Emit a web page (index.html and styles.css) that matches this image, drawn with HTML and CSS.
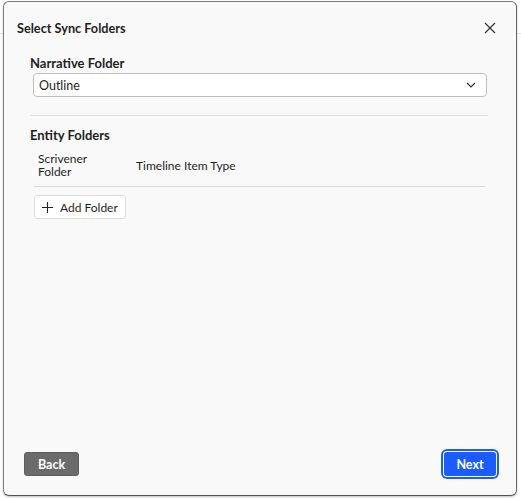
FILE: index.html
```html
<!DOCTYPE html>
<html>
<head>
<meta charset="utf-8">
<link rel="stylesheet" href="styles.css">
</head>
<body>
<div class="page">
  <div class="page-header"></div>
</div>
<div class="dialog" role="dialog">
  <div class="dialog-head">
    <h2 class="dialog-title">Select Sync Folders</h2>
    <button class="close" aria-label="Close">
      <svg width="12" height="12" viewBox="0 0 12 12"><path d="M1 1L11 11M11 1L1 11" stroke="#333" stroke-width="1.2" fill="none"/></svg>
    </button>
  </div>
  <div class="dialog-body">
    <div class="section">
      <div class="label">Narrative Folder</div>
      <div class="select">
        <span>Outline</span>
        <svg width="10" height="6" viewBox="0 0 10 6"><path d="M1 1L5 5L9 1" stroke="#333" stroke-width="1.2" fill="none"/></svg>
      </div>
    </div>
    <div class="divider"></div>
    <div class="section">
      <div class="label">Entity Folders</div>
      <div class="table-head">
        <div class="col1">Scrivener<br>Folder</div>
        <div class="col2">Timeline Item Type</div>
      </div>
      <button class="add-btn">
        <svg width="11" height="11" viewBox="0 0 11 11"><path d="M5.5 0V11M0 5.5H11" stroke="#222" stroke-width="1.1" fill="none"/></svg>
        <span>Add Folder</span>
      </button>
    </div>
  </div>
  <div class="dialog-foot">
    <button class="btn back">Back</button>
    <button class="btn next">Next</button>
  </div>
</div>
</body>
</html>
```
FILE: styles.css
```css
html, body {
  margin: 0;
  padding: 0;
  background: #ffffff;
  font-family: Lato, "Noto Sans", sans-serif;
  color: #1e1e1e;
}
.page {
  height: 500px;
}
.page-header {
  height: 33px;
  border-bottom: 1px solid #e2e2e2;
}
.dialog {
  position: absolute;
  left: 3px;
  top: 1px;
  width: 512px;
  height: 493px;
  background: #f9f9f9;
  border: 1px solid #7a7a7a;
  border-bottom-color: #555;
  border-right-color: #666;
  border-radius: 6px;
  box-shadow: 0 1px 2px rgba(0,0,0,0.25);
  display: flex;
  flex-direction: column;
}
.dialog-head {
  display: flex;
  align-items: center;
  justify-content: space-between;
  padding: 15px 20px 0 13px;
  height: 22px;
}
.dialog-title {
  margin: 0;
  font-size: 12.7px;
  font-weight: 700;
}
.close {
  border: 0;
  background: none;
  padding: 0;
  width: 12px;
  height: 12px;
  display: flex;
}
.dialog-body {
  flex: 1;
  padding: 15px 28px 0 26px;
}
.label {
  font-size: 13px;
  font-weight: 700;
  line-height: 18px;
}
.select {
  margin: 1px 1px 0 3px;
  height: 22px;
  background: #fff;
  border: 1px solid #bdbdbd;
  border-radius: 4px;
  display: flex;
  align-items: center;
  justify-content: space-between;
  padding: 0 10px 0 5px;
  font-size: 12.5px;
}
.divider {
  height: 1px;
  background: #dedede;
  margin: 18px 0 10px 0;
}
.table-head {
  display: flex;
  align-items: center;
  margin: 8px 3px 0 4px;
  padding: 0 0 8px 4px;
  border-bottom: 1px solid #d9d9d9;
  font-size: 12px;
  line-height: 13px;
}
.col1 {
  width: 98px;
}
.add-btn {
  margin: 8px 0 0 4px;
  height: 24px;
  background: #fff;
  border: 1px solid #dcdcdc;
  border-radius: 3px;
  display: flex;
  align-items: center;
  gap: 7px;
  padding: 0 7px 0 7px;
  font-family: inherit;
  font-size: 12px;
  color: #1e1e1e;
}
.dialog-foot {
  display: flex;
  justify-content: space-between;
  align-items: center;
  padding: 0 20px 19px 20px;
}
.btn {
  font-family: inherit;
  font-size: 12.5px;
  font-weight: 700;
  color: #fff;
  height: 24px;
  border-radius: 3px;
  border: 0;
}
.back {
  width: 55px;
  background: #6b6b6b;
  border: 1px solid #5e5e5e;
}
.next {
  width: 52px;
  background: #1b5cff;
  box-shadow: 0 0 0 1px #fff, 0 0 0 3px #1b5cff;
}
```
